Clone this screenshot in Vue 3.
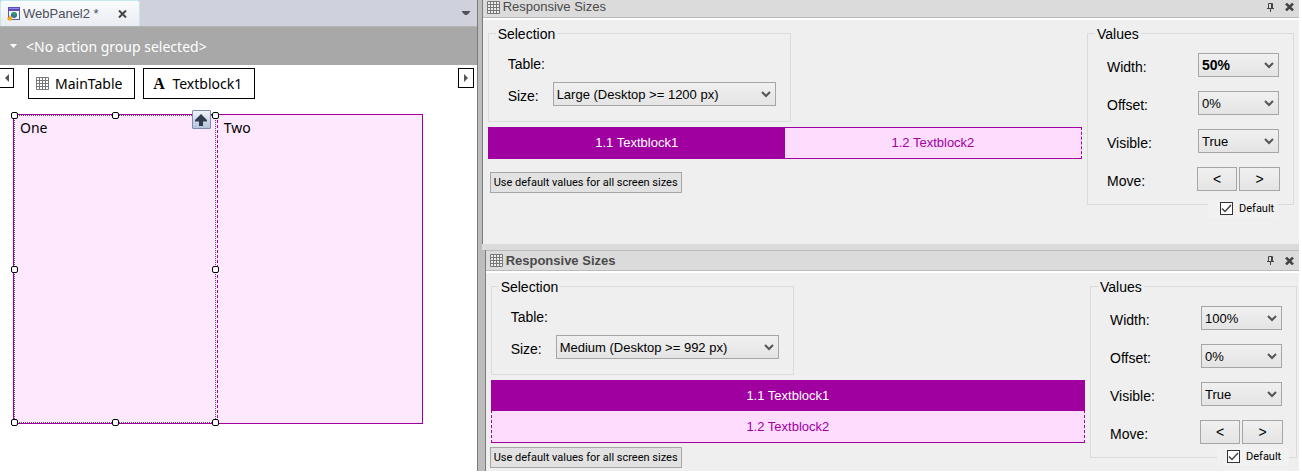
<script setup>
import { reactive } from 'vue'

const handles = ['nw', 'n', 'ne', 'w', 'e', 'sw', 's', 'se']

const panels = reactive([
  {
    id: 'large',
    active: false,
    size: 'Large (Desktop >= 1200 px)',
    stacked: false,
    values: [
      { label: 'Width:', value: '50%', strong: true },
      { label: 'Offset:', value: '0%' },
      { label: 'Visible:', value: 'True' }
    ],
    useDefault: true
  },
  {
    id: 'medium',
    active: true,
    size: 'Medium (Desktop >= 992 px)',
    stacked: true,
    values: [
      { label: 'Width:', value: '100%' },
      { label: 'Offset:', value: '0%' },
      { label: 'Visible:', value: 'True' }
    ],
    useDefault: true
  }
])
</script>

<template>
  <div class="ide">
    <main class="editor">
      <div class="tabs">
        <div class="tab">
          <svg class="tab-icon" width="13" height="14" viewBox="0 0 13 14" aria-hidden="true">
            <rect x="1.5" y=".5" width="11" height="12" fill="#f4f7fd" stroke="#5361a8" />
            <rect x="1" y="0" width="12" height="4" fill="#5b4bbd" />
            <rect x="2" y="1" width="10" height="1" fill="#9186de" />
            <circle cx="7" cy="8" r="3" fill="#2b6f9c" />
            <path d="M5 6l2-1 2 2-1 2-2-1z" fill="#3f9a68" />
            <path d="M3 8l1 1.500 2 .5-1 1.500V13.500H1.500L0 11.500l1.500-1z" fill="#f4a720" />
          </svg>
          <span>WebPanel2 *</span>
          <button class="plain tab-close" type="button" aria-label="Close tab">
            <svg width="9" height="8" viewBox="0 0 9 8"><path d="M1 .5l7 7M8 .5l-7 7" stroke="#444" stroke-width="2" /></svg>
          </button>
        </div>
        <button class="plain tab-menu" type="button" aria-label="Open tab list">
          <svg width="8" height="4" viewBox="0 0 8 4"><path d="M0 0h8v1L5 4H3L0 1z" fill="#50525a" /></svg>
        </button>
      </div>

      <button class="action-group" type="button">
        <svg width="7" height="4" viewBox="0 0 7 4" aria-hidden="true"><path d="M0 0h7L3.500 4z" fill="#fff" /></svg>
        <span>&lt;No action group selected&gt;</span>
      </button>

      <nav class="path">
        <button class="scroll scroll-left" type="button" aria-label="Scroll left">
          <svg width="4" height="8" viewBox="0 0 4 8"><path d="M4 0v8L0 4z" fill="#555" /></svg>
        </button>
        <button class="crumb" type="button">
          <svg width="13" height="13" viewBox="0 0 13 13" aria-hidden="true">
            <path d="M.5 .5h12v12H.5zM3.500 0v13M6.500 0v13M9.500 0v13M0 3.500h13M0 6.500h13M0 9.500h13" fill="none" stroke="#777" />
          </svg>
          <span>MainTable</span>
        </button>
        <button class="crumb" type="button">
          <b>A</b>
          <span>Textblock1</span>
        </button>
        <button class="scroll scroll-right" type="button" aria-label="Scroll right">
          <svg width="4" height="8" viewBox="0 0 4 8"><path d="M0 0v8l4-4z" fill="#555" /></svg>
        </button>
      </nav>

      <section class="canvas">
        <div class="cell cell-selected">
          One
          <div class="selection">
            <i v-for="h in handles" :key="h" :class="['handle', h]"></i>
            <button class="up" type="button" aria-label="Select parent">
              <svg width="12" height="12" viewBox="0 0 12 12"><path d="M6 0l6 6v1.500H8V12H4V7.500H0V6z" fill="#333c4e" /></svg>
            </button>
          </div>
        </div>
        <div class="cell">Two</div>
      </section>
    </main>

    <aside class="tools">
      <template v-for="(panel, index) in panels" :key="panel.id">
        <div v-if="index" class="divider"></div>
        <section :class="['panel', { active: panel.active }]">
          <header class="title">
            <svg width="13" height="13" viewBox="0 0 13 13" aria-hidden="true">
              <path d="M.5 .5h12v12H.5zM3.500 0v13M6.500 0v13M9.500 0v13M0 3.500h13M0 6.500h13M0 9.500h13" fill="#eee" stroke="#777" />
            </svg>
            <h2>Responsive Sizes</h2>
            <button class="plain" type="button" aria-label="Pin panel">
              <svg width="7" height="9" viewBox="0 0 7 9"><path d="M1.500 5V.5h4V5M0 5.500h7M3.500 5.500V9M4.500 1v4" fill="none" stroke="#444" /></svg>
            </button>
            <button class="plain" type="button" aria-label="Close panel">
              <svg width="9" height="8" viewBox="0 0 9 8"><path d="M1 .5l7 7M8 .5l-7 7" stroke="#444" stroke-width="2.500" /></svg>
            </button>
          </header>

          <div class="body">
            <div class="main">
              <fieldset class="group select-group">
                <legend>Selection</legend>
                <div class="table-row">Table:</div>
                <div class="size-row">
                  <label :for="panel.id + '-size'">Size:</label>
                  <span class="drop">
                    <select :id="panel.id + '-size'"><option>{{ panel.size }}</option></select>
                    <svg width="10" height="7" viewBox="0 0 10 7" aria-hidden="true"><path d="M1 1l4 4 4-4" /></svg>
                  </span>
                </div>
              </fieldset>
              <div :class="['blocks', { stacked: panel.stacked }]">
                <div class="block current">1.1 Textblock1</div>
                <div class="block">1.2 Textblock2</div>
              </div>
              <button class="defaults" type="button">Use default values for all screen sizes</button>
            </div>

            <div class="side">
              <fieldset class="group value-group">
                <legend>Values</legend>
                <div v-for="(item, i) in panel.values" :key="item.label" class="value-row">
                  <label :for="panel.id + '-value-' + i">{{ item.label }}</label>
                  <span class="drop">
                    <select :id="panel.id + '-value-' + i" :class="{ strong: item.strong }"><option>{{ item.value }}</option></select>
                    <svg width="10" height="7" viewBox="0 0 10 7" aria-hidden="true"><path d="M1 1l4 4 4-4" /></svg>
                  </span>
                </div>
                <div class="value-row">
                  <span class="label">Move:</span>
                  <span class="move">
                    <button type="button" aria-label="Move left">&lt;</button>
                    <button type="button" aria-label="Move right">&gt;</button>
                  </span>
                </div>
              </fieldset>
              <label class="check">
                <input v-model="panel.useDefault" type="checkbox" />
                <svg width="11" height="9" viewBox="0 0 11 9" aria-hidden="true"><path d="M1 4.500l3 3L10 1" /></svg>
                <span>Default</span>
              </label>
            </div>
          </div>
        </section>
      </template>
    </aside>
  </div>
</template>

<style>
body {
  margin: 0;
  background: #fff;
}
</style>

<style scoped>
.ide,
.ide * {
  box-sizing: border-box;
}

.ide {
  display: flex;
  align-items: stretch;
  padding-right: 3px;
  color: #000;
  font-family: "Liberation Sans", Arial, sans-serif;
  font-size: 14px;
}

button,
select,
input {
  margin: 0;
  padding: 0;
  font: inherit;
  color: inherit;
  border-radius: 0;
}

svg {
  display: block;
  flex: none;
}

.plain {
  border: 0;
  background: none;
}

/* Editor */
.editor {
  flex: 477 1 0;
  min-width: 0;
  background: #fff;
  font-family: "Noto Sans", "Open Sans", sans-serif;
}

.tabs {
  display: flex;
  align-items: stretch;
  justify-content: space-between;
  height: 27px;
  padding-right: 7px;
  background: #cfd2dc;
  border-bottom: 1px solid #b4b4b4;
}

.tab {
  display: flex;
  align-items: center;
  padding: 1px 12px 0 6px;
  color: #4c4f5c;
  font-family: "Liberation Sans", Arial, sans-serif;
  font-size: 13px;
  line-height: 18px;
  background: linear-gradient(#fafbfc, #e9ecf2);
  border: 1px solid #c3e9ec;
  border-width: 1px 1px 0;
  border-radius: 3px 3px 0 0;
}

.tab span {
  margin-left: 3px;
}

.tab-close {
  margin-left: 19px;
}

.action-group {
  display: flex;
  align-items: center;
  gap: 9px;
  width: 100%;
  height: 38px;
  padding: 0 10px;
  border: 0;
  background: #a8a8a8;
  color: #fff;
  font-size: 14px;
}

.path {
  display: flex;
  align-items: flex-start;
  gap: 8px;
  padding: 3px 3px 0 0;
}

.scroll {
  display: flex;
  align-items: center;
  justify-content: center;
  flex: none;
  width: 16px;
  height: 20px;
  border: 1px solid #000;
  background: #fff;
}

.scroll-left {
  width: 14px;
  margin-right: 6px;
  border-left: 0;
}

.scroll-right {
  margin-left: auto;
}

.crumb {
  display: flex;
  align-items: center;
  gap: 6px;
  height: 31px;
  padding: 0 12px 0 7px;
  border: 1px solid #000;
  background: #fff;
  font-size: 14px;
}

.crumb b {
  width: 15px;
  font-family: "Liberation Serif", serif;
  font-size: 16px;
}

.canvas {
  display: grid;
  grid-template-columns: 1fr 1fr;
  height: 310px;
  margin: 15px 54px 0 13px;
  border: 1px solid #a000a0;
  background: #fee8fe;
}

.cell {
  padding: 3px 6px;
  font-size: 14px;
  line-height: 20px;
}

.cell-selected {
  position: relative;
  border-right: 1px dashed #a000a0;
}

.selection {
  position: absolute;
  inset: 0 1px 0 0;
  border: 1px dotted #555;
}

.handle {
  position: absolute;
  width: 7px;
  height: 7px;
  border: 1px solid #000;
  border-radius: 2px;
  background: #fff;
}

.nw, .n, .ne { top: -4px; }
.sw, .s, .se { bottom: -4px; }
.nw, .w, .sw { left: -4px; }
.ne, .e, .se { right: -4px; }
.n, .s { left: calc(50% - 3px); }
.w, .e { top: calc(50% - 3px); }

.up {
  position: absolute;
  top: -6px;
  right: 4px;
  display: flex;
  align-items: center;
  justify-content: center;
  width: 19px;
  height: 19px;
  border: 1px solid #7d8cae;
  border-radius: 1px;
  background: linear-gradient(#f0f4fa, #b4c2dc);
}

/* Tool panels */
.tools {
  display: flex;
  flex-direction: column;
  flex: 822 1 0;
  min-width: 0;
  background: #bdbdbd;
  border-left: 1px solid #7c7c7c;
}

.panel {
  margin-left: 4px;
  border-left: 1px solid #7c7c7c;
  background: #efefef;
}

.panel.active {
  margin-left: 7px;
}

.divider {
  height: 6px;
  margin-left: 4px;
  background: #dbdbdb;
}

.title {
  display: flex;
  align-items: center;
  height: 20px;
  padding: 0 5px 4px 4px;
  border-bottom: 2px solid #fff;
  background: #dbdbdb;
  box-shadow: inset 0 -1px #bbb;
  color: #4a4a4a;
}

.active .title {
  height: 23px;
  border-top: 1px solid #bbb;
  padding: 0 5px 1px 4px;
}

.title h2 {
  flex: 1;
  margin: 0 0 0 3px;
  font-size: 13px;
  font-weight: 400;
  line-height: 14px;
}

.active .title h2 {
  font-weight: 700;
}

.title button {
  margin-left: 11px;
}

.body {
  display: flex;
  gap: 5px;
  height: 224px;
  padding: 4px 5px 0;
}

.active .body {
  height: 198px;
  padding-right: 2px;
}

.main {
  flex: 1;
  min-width: 0;
}

.side {
  flex: none;
  width: 207px;
}

.group {
  margin: 0;
  padding: 0;
  min-width: 0;
  border: 1px solid #dbdbdb;
}

.group legend {
  margin-left: 7px;
  padding: 1px 2px 0;
  line-height: 18px;
}

.select-group {
  width: 51%;
  height: 98px;
}

.value-group {
  height: 181px;
}

.table-row {
  padding: 12px 0 0 19px;
  line-height: 18px;
}

.size-row {
  display: flex;
  padding: 9px 14px 0 19px;
}

.size-row label {
  flex: none;
  width: 45px;
  padding-top: 5px;
  line-height: 18px;
}

.size-row .drop {
  flex: 1;
}

.drop {
  position: relative;
  display: block;
  height: 24px;
}

.drop select {
  display: block;
  width: 100%;
  height: 24px;
  padding: 0 20px 0 3px;
  border: 1px solid #a6a6a6;
  background: linear-gradient(#f0f0f0, #e4e4e4);
  appearance: none;
  font-size: 13px;
}

.drop .strong {
  font-size: 14px;
  font-weight: 700;
}

.drop svg {
  position: absolute;
  top: 9px;
  right: 5px;
  pointer-events: none;
}

.drop path {
  fill: none;
  stroke: #555;
  stroke-width: 2;
}

.blocks {
  display: flex;
  margin-top: 5px;
  border: 1px solid #a000a0;
  border-right-style: dashed;
  background: #fddcfd;
  color: #a000a0;
  font-size: 13px;
  line-height: 30px;
  text-align: center;
}

.blocks.stacked {
  flex-direction: column;
  border-left-style: dashed;
}

.block {
  flex: 1;
}

.current {
  background: #a000a0;
  color: #fff;
}

.stacked .current {
  margin: 0 -1px;
}

.stacked .block + .block {
  line-height: 31px;
}

.defaults {
  display: block;
  width: 192px;
  height: 21px;
  margin: 13px 0 0 2px;
  border: 1px solid #a6a6a6;
  background: #e2e2e2;
  font-family: Roboto, "Liberation Sans", sans-serif;
  font-size: 11px;
  line-height: 18px;
  white-space: nowrap;
}

.active .defaults {
  margin: 4px 0 0 -1px;
}

.value-row {
  display: flex;
  align-items: flex-start;
  height: 24px;
  margin: 0 13px 14px 19px;
}

legend + .value-row {
  margin-top: 10px;
}

.value-row label,
.value-row .label {
  flex: 1;
  padding-top: 5px;
  line-height: 18px;
}

.value-row .drop {
  width: 81px;
  margin-right: 1px;
}

.move {
  display: flex;
  gap: 2px;
}

.move button {
  width: 40px;
  height: 24px;
  border: 1px solid #a6a6a6;
  background: linear-gradient(#f0f0f0, #e4e4e4);
}

.move button + button {
  width: 41px;
}

.check {
  position: relative;
  display: flex;
  align-items: center;
  width: 70px;
  height: 19px;
  margin: -6px 16px 0 auto;
  padding-left: 12px;
  background: #f1f1f1;
  font-family: Roboto, "Liberation Sans", sans-serif;
  font-size: 11px;
}

.active .check {
  width: 72px;
  margin: -11px 8px 0 auto;
  padding-left: 10px;
}

.check input {
  flex: none;
  width: 13px;
  height: 13px;
  border: 1px solid #333;
  background: #fff;
  appearance: none;
}

.check svg {
  margin-left: -12px;
  visibility: hidden;
}

.check input:checked + svg {
  visibility: visible;
}

.check path {
  fill: none;
  stroke: #444;
  stroke-width: 1.500;
}

.check span {
  margin-left: 7px;
}
</style>
